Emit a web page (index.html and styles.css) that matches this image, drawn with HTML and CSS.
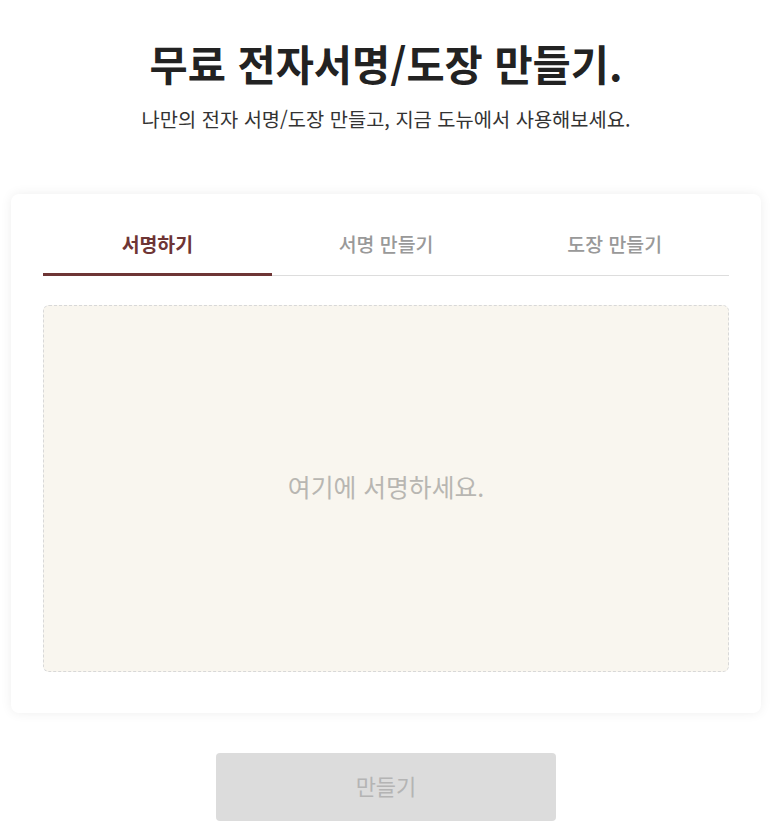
FILE: index.html
```html
<!DOCTYPE html>
<html lang="ko">
<head>
    <meta charset="UTF-8">
    <meta name="viewport" content="width=device-width, initial-scale=1.0">
    <title>무료 전자서명/도장 만들기</title>
    <link rel="stylesheet" href="styles.css">
</head>
<body>

    <div class="page">
        <div class="intro">
            <h1>무료 전자서명/도장 만들기.</h1>
            <p>나만의 전자 서명/도장 만들고, 지금 도뉴에서 사용해보세요.</p>
        </div>

        <!-- Signature Card -->
        <div class="card">
            <div class="tabs">
                <button class="tab active">서명하기</button>
                <button class="tab">서명 만들기</button>
                <button class="tab">도장 만들기</button>
            </div>

            <div class="sign-pad">
                <span class="placeholder">여기에 서명하세요.</span>
            </div>
        </div>

        <button class="make-btn" disabled>만들기</button>
    </div>

</body>
</html>
```

FILE: styles.css
```css
body {
    font-family: "Noto Sans CJK KR", "Noto Sans", sans-serif;
    margin: 0;
    padding: 0;
    background-color: #fff;
    color: #222;
}
.page {
    display: flex;
    flex-direction: column;
    align-items: center;
    padding-right: 2px;
}
.intro {
    text-align: center;
    padding-top: 35px;
}
.intro h1 {
    margin: 0;
    font-size: 41.5px;
    font-weight: 700;
    line-height: 56px;
    color: #222;
}
.intro p {
    margin: 14px 0 0;
    font-size: 19.8px;
    line-height: 28px;
    color: #333;
}
.card {
    width: 750px;
    box-sizing: border-box;
    margin-top: 61px;
    background: white;
    padding: 32px 32px 41px;
    border-radius: 8px;
    box-shadow: 0 0 12px rgba(0, 0, 0, 0.07);
}
.tabs {
    display: flex;
    border-bottom: 1px solid #ddd;
}
.tab {
    flex: 1;
    background: none;
    border: none;
    border-bottom: 3px solid transparent;
    margin-bottom: -1px;
    padding: 0 0 11px;
    font-family: inherit;
    font-size: 19.4px;
    font-weight: 500;
    line-height: 36px;
    color: #999;
    cursor: pointer;
}
.tab.active {
    color: #6e3535;
    font-weight: 700;
    border-bottom-color: #6e3535;
}
.sign-pad {
    margin-top: 29px;
    height: 365px;
    background: #f9f6ef;
    border: 1px dashed #d8d8d8;
    border-radius: 6px;
    display: flex;
    align-items: center;
    justify-content: center;
}
.placeholder {
    padding-bottom: 5px;
    font-size: 24.8px;
    color: #b8b6b2;
}
.make-btn {
    margin-top: 40px;
    width: 340px;
    height: 68px;
    padding: 0 0 4px;
    background: #dcdcdc;
    border: none;
    border-radius: 4px;
    font-family: inherit;
    font-size: 22px;
    color: #b4b4b4;
}
```
